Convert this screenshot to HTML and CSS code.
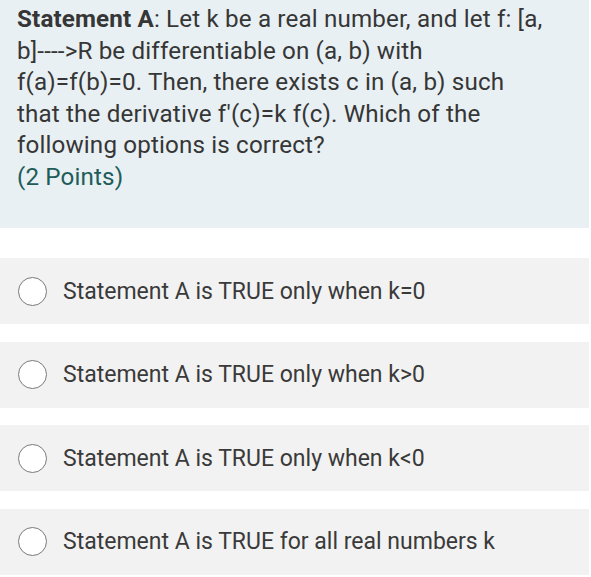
FILE: index.html
```html
<!DOCTYPE html>
<html>
<head>
<meta charset="utf-8">
<link rel="stylesheet" href="styles.css">
</head>
<body>
<div class="page">
  <div class="question">
    <p class="qtext"><b>Statement A</b>: Let k be a real number, and let f: [a,<br>b]----&gt;R be differentiable on (a, b) with<br>f(a)=f(b)=0. Then, there exists c in (a, b) such<br>that the derivative f'(c)=k f(c). Which of the<br>following options is correct?</p>
    <p class="points">(2 Points)</p>
  </div>
  <div class="options">
    <label class="option"><span class="radio"></span><span class="label">Statement A is TRUE only when k=0</span></label>
    <label class="option"><span class="radio"></span><span class="label">Statement A is TRUE only when k&gt;0</span></label>
    <label class="option"><span class="radio"></span><span class="label">Statement A is TRUE only when k&lt;0</span></label>
    <label class="option"><span class="radio"></span><span class="label">Statement A is TRUE for all real numbers k</span></label>
  </div>
</div>
</body>
</html>
```
FILE: styles.css
```css
html, body {
  margin: 0;
  padding: 0;
  background: #ffffff;
}
body {
  font-family: Roboto, "Noto Sans", sans-serif;
  color: #363636;
}
.page {
  width: 589px;
}
.question {
  background: #e8f0f3;
  height: 228px;
  box-sizing: border-box;
  padding: 4px 17px 0 17px;
  font-size: 24.2px;
  letter-spacing: 0.15px;
  line-height: 31.6px;
}
.qtext, .points {
  margin: 0;
}
.qtext {
  white-space: nowrap;
}
.qtext b {
  font-weight: 700;
}
.points {
  color: #1e5c59;
}
.options {
  display: flex;
  flex-direction: column;
  gap: 17.6px;
  padding-top: 30px;
}
.option {
  display: flex;
  align-items: center;
  height: 66px;
  background: #f2f2f2;
  padding-left: 18px;
}
.radio {
  width: 29px;
  height: 29px;
  box-sizing: border-box;
  border: 1.5px solid #7a7a7a;
  border-radius: 50%;
  background: #ffffff;
  flex: none;
}
.label {
  margin-left: 16px;
  font-size: 23px;
  color: #3a3a3a;
}
```
